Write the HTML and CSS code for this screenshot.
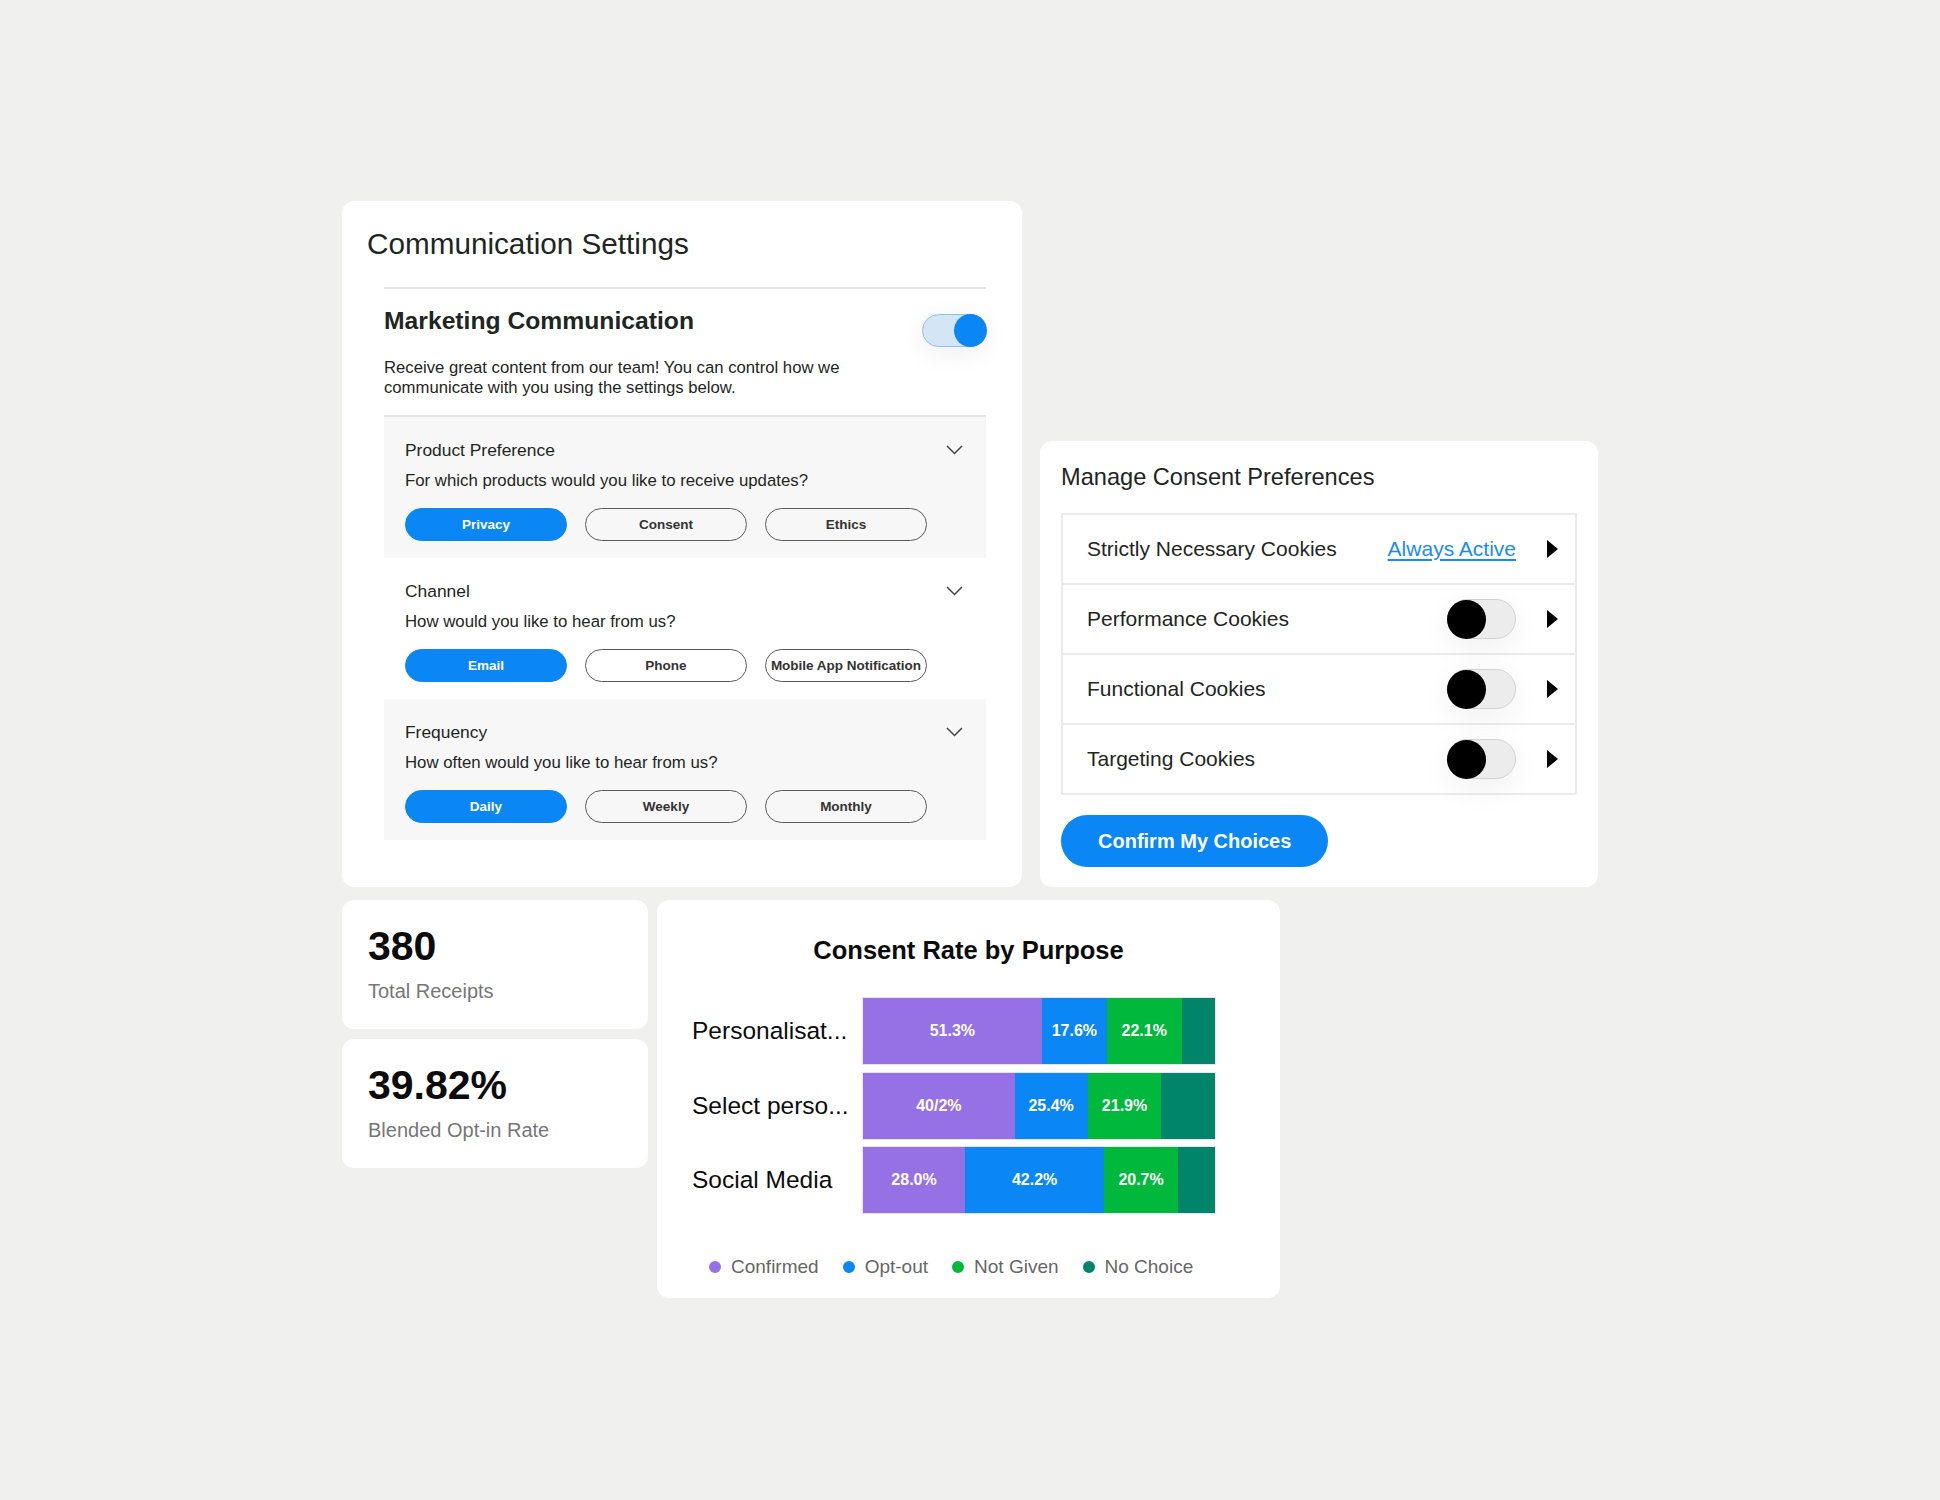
FILE: index.html
```html
<!DOCTYPE html>
<html lang="en">
<head>
    <meta charset="UTF-8">
    <meta name="viewport" content="width=device-width, initial-scale=1.0">
    <title>Consent Dashboard</title>
    <link rel="stylesheet" href="styles.css">
</head>
<body>
    <div class="board">
        <div class="top-row">
            <!-- Communication settings -->
            <div class="card comm-card">
                <h2 class="card-title">Communication Settings</h2>
                <div class="marketing">
                    <div class="marketing-head">
                        <h3>Marketing Communication</h3>
                        <span class="switch on"><span class="knob"></span></span>
                    </div>
                    <p class="marketing-desc">Receive great content from our team! You can control how we communicate with you using the settings below.</p>

                    <div class="pref-list">
                        <div class="pref grey">
                            <div class="pref-head">
                                <span>Product Preference</span>
                                <svg class="chevron" width="17" height="10" viewBox="0 0 17 10"><polyline points="1,1 8.5,8.5 16,1"/></svg>
                            </div>
                            <p class="pref-question">For which products would you like to receive updates?</p>
                            <div class="pill-row">
                                <button class="pill active">Privacy</button>
                                <button class="pill">Consent</button>
                                <button class="pill">Ethics</button>
                            </div>
                        </div>
                        <div class="pref">
                            <div class="pref-head">
                                <span>Channel</span>
                                <svg class="chevron" width="17" height="10" viewBox="0 0 17 10"><polyline points="1,1 8.5,8.5 16,1"/></svg>
                            </div>
                            <p class="pref-question">How would you like to hear from us?</p>
                            <div class="pill-row">
                                <button class="pill active">Email</button>
                                <button class="pill">Phone</button>
                                <button class="pill">Mobile App Notification</button>
                            </div>
                        </div>
                        <div class="pref grey">
                            <div class="pref-head">
                                <span>Frequency</span>
                                <svg class="chevron" width="17" height="10" viewBox="0 0 17 10"><polyline points="1,1 8.5,8.5 16,1"/></svg>
                            </div>
                            <p class="pref-question">How often would you like to hear from us?</p>
                            <div class="pill-row">
                                <button class="pill active">Daily</button>
                                <button class="pill">Weekly</button>
                                <button class="pill">Monthly</button>
                            </div>
                        </div>
                    </div>
                </div>
            </div>

            <!-- Cookie consent -->
            <div class="card consent-card">
                <h2 class="consent-title">Manage Consent Preferences</h2>
                <div class="cookie-table">
                    <div class="cookie-row">
                        <span class="cookie-name">Strictly Necessary Cookies</span>
                        <a class="always" href="#">Always Active</a>
                        <svg class="arrow" width="11" height="18" viewBox="0 0 11 18"><polygon points="0,0 11,9 0,18"/></svg>
                    </div>
                    <div class="cookie-row">
                        <span class="cookie-name">Performance Cookies</span>
                        <span class="switch off"><span class="knob"></span></span>
                        <svg class="arrow" width="11" height="18" viewBox="0 0 11 18"><polygon points="0,0 11,9 0,18"/></svg>
                    </div>
                    <div class="cookie-row">
                        <span class="cookie-name">Functional Cookies</span>
                        <span class="switch off"><span class="knob"></span></span>
                        <svg class="arrow" width="11" height="18" viewBox="0 0 11 18"><polygon points="0,0 11,9 0,18"/></svg>
                    </div>
                    <div class="cookie-row">
                        <span class="cookie-name">Targeting Cookies</span>
                        <span class="switch off"><span class="knob"></span></span>
                        <svg class="arrow" width="11" height="18" viewBox="0 0 11 18"><polygon points="0,0 11,9 0,18"/></svg>
                    </div>
                </div>
                <button class="confirm-button">Confirm My Choices</button>
            </div>
        </div>

        <div class="bottom-row">
            <div class="stats">
                <div class="card stat-card">
                    <div class="stat-value">380</div>
                    <div class="stat-label">Total Receipts</div>
                </div>
                <div class="card stat-card">
                    <div class="stat-value">39.82%</div>
                    <div class="stat-label">Blended Opt-in Rate</div>
                </div>
            </div>

            <!-- Stacked bar chart -->
            <div class="card chart-card">
                <h2 class="chart-title">Consent Rate by Purpose</h2>
                <div class="chart-rows">
                    <div class="chart-row">
                        <span class="chart-label">Personalisat...</span>
                        <div class="bar">
                            <span class="seg confirmed" style="width: 50.8%">51.3%</span>
                            <span class="seg optout" style="width: 18.5%">17.6%</span>
                            <span class="seg notgiven" style="width: 21.2%">22.1%</span>
                            <span class="seg nochoice" style="width: 9.5%"></span>
                        </div>
                    </div>
                    <div class="chart-row">
                        <span class="chart-label">Select perso...</span>
                        <div class="bar">
                            <span class="seg confirmed" style="width: 43.1%">40/2%</span>
                            <span class="seg optout" style="width: 20.7%">25.4%</span>
                            <span class="seg notgiven" style="width: 21%">21.9%</span>
                            <span class="seg nochoice" style="width: 15.2%"></span>
                        </div>
                    </div>
                    <div class="chart-row">
                        <span class="chart-label">Social Media</span>
                        <div class="bar">
                            <span class="seg confirmed" style="width: 29%">28.0%</span>
                            <span class="seg optout" style="width: 39.5%">42.2%</span>
                            <span class="seg notgiven" style="width: 21%">20.7%</span>
                            <span class="seg nochoice" style="width: 10.5%"></span>
                        </div>
                    </div>
                </div>
                <div class="legend">
                    <span class="legend-item"><i class="dot confirmed"></i>Confirmed</span>
                    <span class="legend-item"><i class="dot optout"></i>Opt-out</span>
                    <span class="legend-item"><i class="dot notgiven"></i>Not Given</span>
                    <span class="legend-item"><i class="dot nochoice"></i>No Choice</span>
                </div>
            </div>
        </div>
    </div>
</body>
</html>
```

FILE: styles.css
```css
body {
    font-family: "Liberation Sans", Arial, sans-serif;
    background-color: #f0f0ee;
    color: #1e2622;
    margin: 0;
    padding: 0;
}

h2, h3, p {
    margin: 0;
}

.board {
    display: flex;
    flex-direction: column;
    gap: 13px;
    padding: 201px 0 0 342px;
}

.top-row {
    display: flex;
    align-items: flex-end;
    gap: 18px;
}

.bottom-row {
    display: flex;
    align-items: flex-start;
    gap: 9px;
}

.card {
    background-color: #fff;
    border-radius: 12px;
    box-sizing: border-box;
}

/* Communication settings */
.comm-card {
    width: 680px;
    padding: 26px 36px 47px 25px;
}

.card-title {
    font-size: 29.7px;
    line-height: 34px;
    font-weight: normal;
}

.marketing {
    margin-left: 17px;
    margin-top: 26px;
    border-top: 2px solid #e6e6e6;
}

.marketing-head {
    display: flex;
    justify-content: space-between;
    align-items: flex-start;
    margin-top: 18px;
}

.marketing-head h3 {
    font-size: 24.7px;
    line-height: 28px;
    font-weight: bold;
}

.marketing-head .switch {
    margin-top: 7px;
}

.marketing-desc {
    font-size: 16.7px;
    line-height: 20px;
    max-width: 490px;
    margin-top: 11px;
}

.pref-list {
    margin-top: 17px;
    border-top: 2px solid #e6e6e6;
}

.pref {
    padding: 23px 23px 17px 21px;
}

.pref.grey {
    background-color: #f7f7f7;
}

.pref-head {
    display: flex;
    justify-content: space-between;
    align-items: center;
    font-size: 17.4px;
    line-height: 20px;
}

.chevron {
    fill: none;
    stroke: #444;
    stroke-width: 1.5;
}

.pref-question {
    font-size: 16.8px;
    line-height: 20px;
    margin-top: 11px;
}

.pill-row {
    display: flex;
    gap: 18px;
    margin-top: 17px;
}

.pill {
    width: 162px;
    height: 33px;
    padding: 0;
    border: 1px solid #5a5a5a;
    border-radius: 17px;
    background-color: transparent;
    color: #333;
    font-family: inherit;
    font-size: 13.5px;
    font-weight: bold;
    white-space: nowrap;
}

.pill.active {
    background-color: #0a87f4;
    border-color: #0a87f4;
    color: #fff;
}

/* Toggle switches */
.switch {
    display: flex;
    align-items: center;
    box-sizing: border-box;
    flex: none;
}

.switch .knob {
    display: block;
    flex: none;
    border-radius: 50%;
}

.switch.on {
    justify-content: flex-end;
    width: 64px;
    height: 33px;
    border: 1.5px solid #8cc0f2;
    border-radius: 17px;
    background-color: #d4e6f6;
    box-shadow: 0 6px 26px rgba(0, 0, 0, 0.07);
}

.switch.on .knob {
    width: 33px;
    height: 33px;
    margin-right: -1.5px;
    background-color: #0a87f4;
}

.switch.off {
    justify-content: flex-start;
    width: 69px;
    height: 40px;
    border: 1px solid #d2d2d2;
    border-radius: 20px;
    background-color: #ececec;
    box-shadow: 0 10px 30px rgba(0, 0, 0, 0.06);
}

.switch.off .knob {
    width: 39px;
    height: 39px;
    margin-left: -1px;
    background-color: #000;
}

/* Cookie consent */
.consent-card {
    width: 558px;
    padding: 22px 21px 20px 21px;
}

.consent-title {
    font-size: 23.6px;
    line-height: 28px;
    font-weight: normal;
}

.cookie-table {
    margin-top: 22px;
    border: 2px solid #ebebeb;
}

.cookie-row {
    display: flex;
    align-items: center;
    height: 68px;
    padding: 0 17px 0 24px;
    font-size: 21px;
}

.cookie-row + .cookie-row {
    border-top: 2px solid #ebebeb;
}

.cookie-name {
    flex: 1;
}

.always {
    color: #1a8cf5;
    text-decoration: underline;
    text-underline-offset: 3px;
}

.arrow {
    margin-left: 31px;
    fill: #000;
}

.confirm-button {
    margin-top: 20px;
    height: 52px;
    padding: 0 37px;
    border: none;
    border-radius: 26px;
    background-color: #0a87f4;
    color: #fff;
    font-family: inherit;
    font-size: 20px;
    font-weight: bold;
}

/* Stat cards */
.stats {
    display: flex;
    flex-direction: column;
    gap: 10px;
}

.stat-card {
    width: 306px;
    padding: 23px 26px 26px;
}

.stat-value {
    font-size: 41px;
    line-height: 46px;
    font-weight: bold;
    color: #0c0c0c;
}

.stat-label {
    font-size: 20px;
    line-height: 24px;
    margin-top: 10px;
    color: #767676;
}

/* Chart */
.chart-card {
    width: 623px;
    padding: 35px 0 19px;
}

.chart-title {
    font-size: 25.5px;
    line-height: 30px;
    font-weight: bold;
    text-align: center;
    color: #0c0c0c;
}

.chart-rows {
    display: flex;
    flex-direction: column;
    gap: 8.5px;
    margin-top: 33px;
    padding-left: 35px;
}

.chart-row {
    display: flex;
    align-items: center;
}

.chart-label {
    width: 171px;
    font-size: 24.5px;
    color: #0c0c0c;
    white-space: nowrap;
}

.bar {
    display: flex;
    width: 352px;
    height: 66px;
    box-shadow: 0 0 0 1px #e6e4ef;
}

.seg {
    display: flex;
    align-items: center;
    justify-content: center;
    color: #fff;
    font-size: 16px;
    font-weight: bold;
}

.confirmed { background-color: #9671e5; }
.optout { background-color: #0a87f4; }
.notgiven { background-color: #00b93c; }
.nochoice { background-color: #00856a; }

.legend {
    display: flex;
    gap: 24px;
    margin-top: 42px;
    padding-left: 52px;
    font-size: 19px;
    line-height: 24px;
    color: #666;
}

.legend-item {
    display: flex;
    align-items: center;
    gap: 10px;
}

.dot {
    width: 12px;
    height: 12px;
    border-radius: 50%;
}
```
